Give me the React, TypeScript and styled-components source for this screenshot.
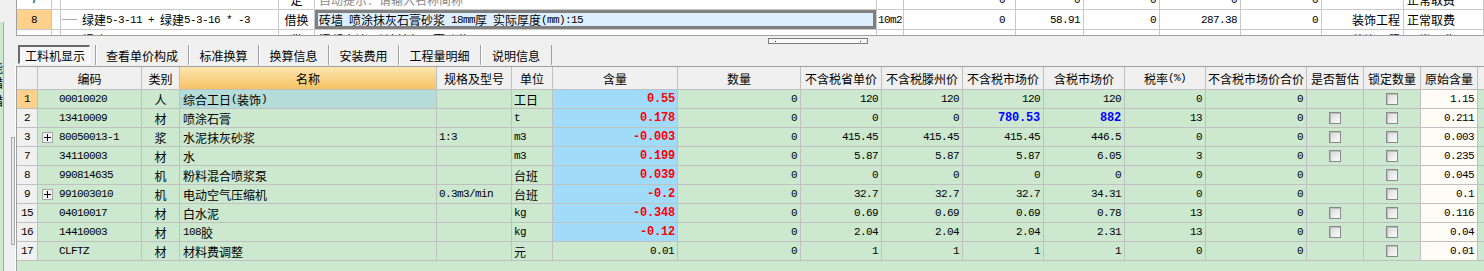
import React from "react";
import styled, { createGlobalStyle } from "styled-components";

const CJK = `"Noto Sans CJK SC", "Noto Sans CJK JP", sans-serif`;
const MONO = `"Liberation Mono", "DejaVu Sans Mono", monospace`;

const GlobalStyle = createGlobalStyle`
  html, body { margin: 0; padding: 0; height: 100%; overflow: hidden; background: #f0f0f0; }
  #root { height: 100%; }
  body { font-family: ${CJK}; font-size: 12px; color: #000; }
`;

type Align = "left" | "center" | "right";

const Latin = styled.span`
  font-family: ${MONO};
  font-size: 11px;
  letter-spacing: -0.6px;
`;
const Han = styled.span`
  font-family: ${CJK};
  font-size: 12px;
`;
const Strong = styled.span<{ $tone: "red" | "blue" }>`
  font-family: ${MONO};
  font-size: 12px;
  font-weight: 700;
  letter-spacing: -0.2px;
  color: ${(p) => (p.$tone === "red" ? "#ff0000" : "#0000ff")};
`;

function Mixed({ text }: { text: string }) {
  const parts = text.match(/[\x20-\x7e]+|[^\x20-\x7e]+/g) ?? [];
  return (
    <>
      {parts.map((p, i) =>
        /^[\x20-\x7e]/.test(p) ? <Latin key={i}>{p}</Latin> : <Han key={i}>{p}</Han>
      )}
    </>
  );
}

/* ---------- page frame ---------- */
const Page = styled.div`
  display: flex;
  width: 1484px;
  height: 271px;
  overflow: hidden;
  background: #f0f0f0;
`;

const LeftPanel = styled.div`
  flex: 0 0 16px;
  display: flex;
  height: 100%;
`;
const LeftList = styled.div`
  width: 3px;
  margin-top: 22px;
  background: #cce8cf;
  border-right: 1px solid #8fb893;
  overflow: hidden;
  display: flex;
  flex-direction: column;
`;
const LeftGlyph = styled.span<{ $top: number }>`
  margin: ${(p) => p.$top}px 0 0 -9px;
  font-family: ${CJK};
  font-size: 12px;
  line-height: 12px;
  height: 12px;
  white-space: nowrap;
`;
const LeftTrack = styled.div`
  width: 4px;
  margin-left: 7px;
  display: flex;
  flex-direction: column;
  padding-top: 137px;
  box-sizing: border-box;
`;
const LeftThumb = styled.div`
  height: 108px;
  box-sizing: border-box;
  border: 1px solid #a8a8a8;
  background: #e8e8e8;
`;
const LeftEdge = styled.div`
  width: 1px;
  margin-top: 66px;
  background: #ffffff;
`;

const Main = styled.div`
  flex: 1;
  min-width: 0;
  height: 100%;
  display: flex;
  flex-direction: column;
`;

/* ---------- upper grid ---------- */
const UPPER_COLS = "35px 9px 218px 36px 562px 27px 112px 68px 76px 81px 81px 82px 80px";

const UpperView = styled.div`
  flex: 0 0 36px;
  height: 36px;
  box-sizing: border-box;
  overflow: hidden;
  border-left: 1px solid #a0a0a0;
  border-bottom: 1px solid #a0a0a0;
  background: #fff;
`;
const UpperRows = styled.div`
  margin-top: -10px;
`;
const UpperRow = styled.div`
  display: grid;
  grid-template-columns: ${UPPER_COLS};
  height: 20px;
`;
const UCell = styled.div<{ $align?: Align; $bg?: string; $pl?: number; $pr?: number; $sel?: boolean; $muted?: boolean }>`
  box-sizing: border-box;
  border-right: 1px solid #c8c8c8;
  border-bottom: 1px solid #c8c8c8;
  background: ${(p) => p.$bg ?? "#fff"};
  display: flex;
  align-items: center;
  justify-content: ${(p) => (p.$align === "right" ? "flex-end" : p.$align === "center" ? "center" : "flex-start")};
  padding: 0 ${(p) => p.$pr ?? 3}px 0 ${(p) => p.$pl ?? 3}px;
  white-space: pre;
  overflow: hidden;
  color: ${(p) => (p.$muted ? "#8a8a8a" : "#000")};
  box-shadow: ${(p) => (p.$sel ? "inset 0 0 0 3px #808080" : "none")};
`;
const TreeDash = styled.span`
  flex: 0 0 15px;
  height: 1px;
  background: #a8a8a8;
  margin-right: 5px;
`;

interface UpperItem {
  no: string;
  code: string;
  kind: string;
  name: string;
  muted?: boolean;
  sel?: boolean;
  unit: string;
  v: string[];
  major: string;
  fee: string;
  active?: boolean;
}

const upperItems: UpperItem[] = [
  { no: "7", code: "", kind: "定", name: "自动提示：请输入名称简称", muted: true, unit: "", v: ["0", "0", "0", "0", "0"], major: "", fee: "正常取费" },
  { no: "8", code: "绿建5-3-11 + 绿建5-3-16 * -3", kind: "借换", name: "砖墙 喷涂抹灰石膏砂浆 18mm厚 实际厚度(mm):15", sel: true, unit: "10m2", v: ["0", "58.91", "0", "287.38", "0"], major: "装饰工程", fee: "正常取费", active: true },
  { no: "9", code: "绿建5-3-12", kind: "借", name: "混凝土墙 喷涂抹灰石膏砂浆 18mm厚", unit: "10m2", v: ["0", "178.95", "0", "598.64", "0"], major: "装饰工程", fee: "正常取费" },
];

/* ---------- splitter & tabs ---------- */
const Splitter = styled.div`
  flex: 0 0 9px;
  height: 9px;
  box-sizing: border-box;
  display: flex;
  align-items: flex-start;
  padding: 2px 0 0 752px;
`;
const Handle = styled.div`
  width: 100px;
  height: 6px;
  box-sizing: border-box;
  border: 1px solid #7c7c7c;
  background: #f8f8f8;
  display: flex;
  align-items: center;
  justify-content: space-between;
  padding: 0 6px;
`;
const HandleDot = styled.span`
  width: 1px;
  height: 1px;
  background: #1a237e;
`;

const TabBar = styled.div`
  flex: 0 0 21px;
  height: 21px;
  box-sizing: border-box;
  display: flex;
  align-items: flex-start;
  padding-left: 2px;
`;
const ActiveTab = styled.div`
  width: 72px;
  height: 19px;
  box-sizing: border-box;
  margin-right: 5px;
  border-top: 2px solid #6a6a6a;
  border-left: 2px solid #6a6a6a;
  border-right: 1px solid #ffffff;
  border-bottom: 1px solid #ffffff;
  background: #f6f6f6;
  display: flex;
  align-items: center;
  padding-left: 5px;
  font-size: 12px;
  white-space: nowrap;
`;
const Tab = styled.div<{ $w: number; $last?: boolean }>`
  width: ${(p) => p.$w}px;
  height: 20px;
  box-sizing: border-box;
  border-left: 1px solid #a0a0a0;
  border-right: ${(p) => (p.$last ? "1px solid #a0a0a0" : "none")};
  box-shadow: inset 1px 0 0 #ffffff;
  display: flex;
  align-items: center;
  justify-content: center;
  font-size: 12px;
  white-space: nowrap;
`;

const tabs: [string, number][] = [
  ["查看单价构成", 93],
  ["标准换算", 70],
  ["换算信息", 70],
  ["安装费用", 70],
  ["工程量明细", 82],
  ["说明信息", 72],
];

/* ---------- lower grid ---------- */
const LOWER_COLS =
  "21px 104px 38px 257px 75px 41px 125px 123px 81px 81px 81px 81px 81px 101px 57px 57px 57px 1fr";

const GREEN = "#cce8cf";
const BLUE = "#a0dcfa";
const ORANGE = "#fdd18c";
const TEAL = "#b4dcd8";
const GRAY = "#f0f0f0";
const CREAM = "#fffcf8";

const LowerView = styled.div`
  flex: 1;
  min-height: 0;
  border-left: 1px solid #a0a0a0;
  border-top: 1px solid #a0a0a0;
  background: ${GREEN};
`;
const HeaderRow = styled.div`
  display: grid;
  grid-template-columns: ${LOWER_COLS};
  height: 23px;
`;
const HCell = styled.div<{ $hl?: boolean; $open?: boolean }>`
  box-sizing: border-box;
  border-right: ${(p) => (p.$open ? "none" : "1px solid #c0c0c0")};
  border-bottom: 1px solid #c0c0c0;
  background: ${(p) => (p.$hl ? "linear-gradient(#fde6b0, #f5c264)" : GRAY)};
  display: flex;
  align-items: center;
  justify-content: center;
  white-space: pre;
  overflow: hidden;
`;
const DataRow = styled.div`
  display: grid;
  grid-template-columns: ${LOWER_COLS};
  height: 19px;
`;
const LCell = styled.div<{ $align?: Align; $bg?: string; $pl?: number; $pr?: number; $open?: boolean }>`
  box-sizing: border-box;
  border-right: ${(p) => (p.$open ? "none" : "1px solid #c0c0c0")};
  border-bottom: 1px solid #c0c0c0;
  background: ${(p) => p.$bg ?? GREEN};
  display: flex;
  align-items: center;
  justify-content: ${(p) => (p.$align === "right" ? "flex-end" : p.$align === "center" ? "center" : "flex-start")};
  padding: 0 ${(p) => p.$pr ?? 3}px 0 ${(p) => p.$pl ?? 3}px;
  white-space: pre;
  overflow: hidden;
`;
const ExpandSlot = styled.span`
  flex: 0 0 11px;
  height: 11px;
  margin-right: 6px;
  display: flex;
`;
const ExpandBox = styled.span`
  width: 11px;
  height: 11px;
  box-sizing: border-box;
  border: 1px solid #a6a6a6;
  background: #f2f2f2;
  display: flex;
  align-items: center;
  justify-content: center;
`;
const Check = styled.span`
  width: 12px;
  height: 12px;
  box-sizing: border-box;
  border: 1px solid #8a8a8a;
  background: linear-gradient(135deg, #d4d4d4 0%, #ececec 55%, #fbfbfb 100%);
  box-shadow: inset 1px 1px 0 #bdbdbd;
`;

interface Item {
  no: string;
  code: string;
  expand?: boolean;
  kind: string;
  name: string;
  spec: string;
  unit: string;
  qty: string;
  plainQty?: boolean;
  amount: string;
  p1: string;
  p2: string;
  p3: string;
  p4: string;
  blue?: boolean;
  rate: string;
  total: string;
  est: boolean;
  orig: string;
  active?: boolean;
}

const items: Item[] = [
  { no: "1", code: "00010020", kind: "人", name: "综合工日(装饰)", spec: "", unit: "工日", qty: "0.55", amount: "0", p1: "120", p2: "120", p3: "120", p4: "120", rate: "0", total: "0", est: false, orig: "1.15", active: true },
  { no: "2", code: "13410009", kind: "材", name: "喷涂石膏", spec: "", unit: "t", qty: "0.178", amount: "0", p1: "0", p2: "0", p3: "780.53", p4: "882", blue: true, rate: "13", total: "0", est: true, orig: "0.211" },
  { no: "3", code: "80050013-1", expand: true, kind: "浆", name: "水泥抹灰砂浆", spec: "1:3", unit: "m3", qty: "-0.003", amount: "0", p1: "415.45", p2: "415.45", p3: "415.45", p4: "446.5", rate: "0", total: "0", est: true, orig: "0.003" },
  { no: "7", code: "34110003", kind: "材", name: "水", spec: "", unit: "m3", qty: "0.199", amount: "0", p1: "5.87", p2: "5.87", p3: "5.87", p4: "6.05", rate: "3", total: "0", est: true, orig: "0.235" },
  { no: "8", code: "990814635", kind: "机", name: "粉料混合喷浆泵", spec: "", unit: "台班", qty: "0.039", amount: "0", p1: "0", p2: "0", p3: "0", p4: "0", rate: "0", total: "0", est: false, orig: "0.045" },
  { no: "9", code: "991003010", expand: true, kind: "机", name: "电动空气压缩机", spec: "0.3m3/min", unit: "台班", qty: "-0.2", amount: "0", p1: "32.7", p2: "32.7", p3: "32.7", p4: "34.31", rate: "0", total: "0", est: false, orig: "0.1" },
  { no: "15", code: "04010017", kind: "材", name: "白水泥", spec: "", unit: "kg", qty: "-0.348", amount: "0", p1: "0.69", p2: "0.69", p3: "0.69", p4: "0.78", rate: "13", total: "0", est: true, orig: "0.116" },
  { no: "16", code: "14410003", kind: "材", name: "108胶", spec: "", unit: "kg", qty: "-0.12", amount: "0", p1: "2.04", p2: "2.04", p3: "2.04", p4: "2.31", rate: "13", total: "0", est: true, orig: "0.04" },
  { no: "17", code: "CLFTZ", kind: "材", name: "材料费调整", spec: "", unit: "元", qty: "0.01", plainQty: true, amount: "0", p1: "1", p2: "1", p3: "1", p4: "1", rate: "0", total: "0", est: false, orig: "0.01" },
];

const headers = [
  "", "编码", "类别", "名称", "规格及型号", "单位", "含量", "数量", "不含税省单价", "不含税滕州价",
  "不含税市场价", "含税市场价", "税率(%)", "不含税市场价合价", "是否暂估", "锁定数量", "原始含量", "",
];

function PlusIcon() {
  return (
    <svg width="7" height="7" viewBox="0 0 7 7">
      <path d="M0 3.5H7M3.5 0V7" stroke="#000" strokeWidth="1" shapeRendering="crispEdges" />
    </svg>
  );
}

export default function App() {
  return (
    <>
      <GlobalStyle />
      <Page>
        <LeftPanel>
          <LeftList>
            <LeftGlyph $top={40}>能</LeftGlyph>
            <LeftGlyph $top={3}>措</LeftGlyph>
            <LeftGlyph $top={6}>措</LeftGlyph>
            <LeftGlyph $top={85}>t</LeftGlyph>
          </LeftList>
          <LeftTrack>
            <LeftThumb />
          </LeftTrack>
          <LeftEdge />
        </LeftPanel>

        <Main>
          <UpperView>
            <UpperRows>
              {upperItems.map((u) => (
                <UpperRow key={u.no}>
                  <UCell $align="center" $bg={u.active ? ORANGE : "#fff"}>
                    <Latin>{u.no}</Latin>
                  </UCell>
                  <UCell />
                  <UCell $pl={1}>
                    <TreeDash />
                    <Mixed text={u.code} />
                  </UCell>
                  <UCell $align="center" $pl={1} $pr={1}>
                    <Han>{u.kind}</Han>
                  </UCell>
                  <UCell $pl={4} $bg={u.sel ? "#ddeeff" : "#fff"} $sel={u.sel} $muted={u.muted}>
                    <Mixed text={u.name} />
                  </UCell>
                  <UCell $pl={1} $pr={1}>
                    <Latin>{u.unit}</Latin>
                  </UCell>
                  {u.v.map((x, i) => (
                    <UCell key={i} $align="right" $pr={i === 0 ? 10 : 3}>
                      <Latin>{x}</Latin>
                    </UCell>
                  ))}
                  <UCell $align="right">
                    <Han>{u.major}</Han>
                  </UCell>
                  <UCell>
                    <Han>{u.fee}</Han>
                  </UCell>
                </UpperRow>
              ))}
            </UpperRows>
          </UpperView>

          <Splitter>
            <Handle>
              <HandleDot />
              <HandleDot />
            </Handle>
          </Splitter>

          <TabBar>
            <ActiveTab>工料机显示</ActiveTab>
            {tabs.map(([t, w], i) => (
              <Tab key={t} $w={w} $last={i === tabs.length - 1}>
                {t}
              </Tab>
            ))}
          </TabBar>

          <LowerView>
            <HeaderRow>
              {headers.map((h, i) => (
                <HCell key={i} $hl={h === "名称"} $open={i === headers.length - 1}>
                  <Mixed text={h} />
                </HCell>
              ))}
            </HeaderRow>
            {items.map((it) => (
              <DataRow key={it.no}>
                <LCell $align="center" $pl={0} $pr={0} $bg={it.active ? ORANGE : GRAY}>
                  <Latin>{it.no}</Latin>
                </LCell>
                <LCell $pl={4}>
                  <ExpandSlot>
                    {it.expand && (
                      <ExpandBox>
                        <PlusIcon />
                      </ExpandBox>
                    )}
                  </ExpandSlot>
                  <Latin>{it.code}</Latin>
                </LCell>
                <LCell $align="center" $pl={0} $pr={0}>
                  <Han>{it.kind}</Han>
                </LCell>
                <LCell $bg={it.active ? TEAL : GREEN}>
                  <Mixed text={it.name} />
                </LCell>
                <LCell $pl={2}>
                  <Latin>{it.spec}</Latin>
                </LCell>
                <LCell $pl={2}>
                  <Mixed text={it.unit} />
                </LCell>
                <LCell $align="right" $pr={it.plainQty ? 3 : 2} $bg={it.plainQty ? GREEN : BLUE}>
                  {it.plainQty ? <Latin>{it.qty}</Latin> : <Strong $tone="red">{it.qty}</Strong>}
                </LCell>
                <LCell $align="right">
                  <Latin>{it.amount}</Latin>
                </LCell>
                <LCell $align="right">
                  <Latin>{it.p1}</Latin>
                </LCell>
                <LCell $align="right">
                  <Latin>{it.p2}</Latin>
                </LCell>
                <LCell $align="right">
                  {it.blue ? <Strong $tone="blue">{it.p3}</Strong> : <Latin>{it.p3}</Latin>}
                </LCell>
                <LCell $align="right">
                  {it.blue ? <Strong $tone="blue">{it.p4}</Strong> : <Latin>{it.p4}</Latin>}
                </LCell>
                <LCell $align="right">
                  <Latin>{it.rate}</Latin>
                </LCell>
                <LCell $align="right">
                  <Latin>{it.total}</Latin>
                </LCell>
                <LCell $align="center" $pl={0} $pr={0}>
                  {it.est && <Check />}
                </LCell>
                <LCell $align="center" $pl={0} $pr={0}>
                  <Check />
                </LCell>
                <LCell $align="right" $bg={CREAM}>
                  <Latin>{it.orig}</Latin>
                </LCell>
                <LCell $open />
              </DataRow>
            ))}
          </LowerView>
        </Main>
      </Page>
    </>
  );
}
